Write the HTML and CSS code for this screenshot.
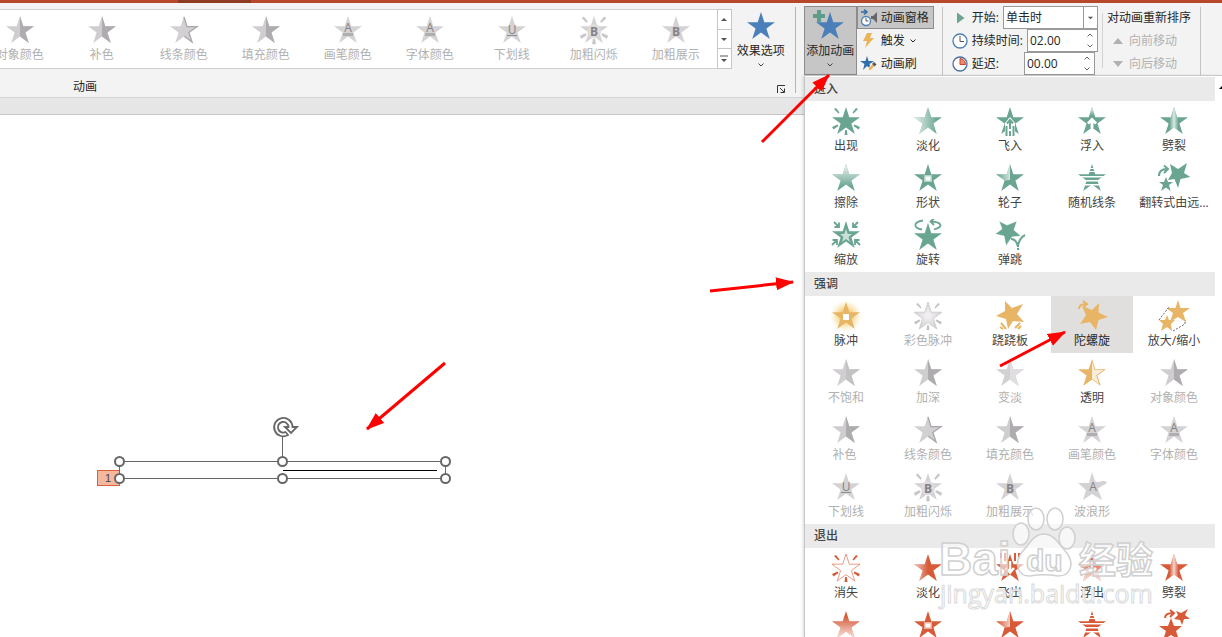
FILE: index.html
```html
<!DOCTYPE html>
<html lang="zh-CN">
<head>
<meta charset="utf-8">
<title>动画</title>
<link rel="stylesheet" href="styles.css">
</head>
<body>
<svg class="defs" aria-hidden="true">
  <defs>
    <linearGradient id="fade-left"><stop offset="0.1" stop-color="#fff" stop-opacity="0.75"/><stop offset="0.85" stop-color="#fff" stop-opacity="0"/></linearGradient>
    <linearGradient id="fade-half"><stop offset="0.1" stop-color="#fff" stop-opacity="0.55"/><stop offset="0.5" stop-color="#fff" stop-opacity="0"/></linearGradient>
    <linearGradient id="fade-quarter"><stop offset="0.1" stop-color="#fff" stop-opacity="0"/><stop offset="1" stop-color="#fff" stop-opacity="0.7"/></linearGradient>
    <linearGradient id="fade-top" x2="0" y2="1"><stop offset="0" stop-color="#fff" stop-opacity="0.9"/><stop offset="0.85" stop-color="#fff" stop-opacity="0"/></linearGradient>
    <linearGradient id="fade-bottom" x2="0" y2="1"><stop offset="0.2" stop-color="#fff" stop-opacity="0"/><stop offset="1" stop-color="#fff" stop-opacity="0.85"/></linearGradient>
    <linearGradient id="fade-mid"><stop offset="0.34" stop-color="#fff" stop-opacity="0"/><stop offset="0.5" stop-color="#fff" stop-opacity="0.75"/><stop offset="0.66" stop-color="#fff" stop-opacity="0"/></linearGradient>
    <radialGradient id="glow"><stop offset="0.4" stop-color="#f3c766" stop-opacity="0.8"/><stop offset="1" stop-color="#f9e3a8" stop-opacity="0"/></radialGradient>
    <radialGradient id="core"><stop offset="0" stop-color="#f6f3f6"/><stop offset="1" stop-color="#d2d0d2"/></radialGradient>
    <path id="star" d="M16 2 19.3 12.2H30L21.4 18.6 24.8 29 16 22.6 7.2 29 10.6 18.6 2 12.2H12.7Z"/>
    <path id="half" d="M16 2 19.3 12.2H30L21.4 18.6 24.8 29 16 22.6Z"/>
    <path id="rays" d="M4 4 6 3 9.500 7.500 8.500 8.500ZM28 4 26 3 22.500 7.500 23.500 8.500ZM2 22 7.500 19.500 8.500 21 3.500 24.500ZM30 22 24.500 19.500 23.500 21 28.500 24.500ZM14.500 30H17.500L16.800 25H15.200Z"/>
    <clipPath id="bars-clip"><path d="M0 0H32V6H0ZM0 7H32V9H0ZM0 10H32V14H0ZM0 15.500H32V18H0ZM0 19.500H32V22H0ZM0 23.500H32V32H0Z"/></clipPath>
    <marker id="head" viewBox="0 0 18 14" markerWidth="18" markerHeight="14" refX="17" refY="7" markerUnits="userSpaceOnUse" orient="auto"><path d="M0 0.500 18 7 0 13.500Z" fill="#f00"/></marker>

    <symbol id="i-solid" viewBox="0 0 32 32"><use href="#star" fill="currentColor"/></symbol>
    <symbol id="i-appear" viewBox="0 0 32 32"><use href="#star" fill="currentColor"/><use href="#rays" fill="currentColor"/></symbol>
    <symbol id="i-vanish" viewBox="0 0 32 32"><use href="#star" fill="#fff" stroke="currentColor" stroke-opacity="0.6"/><use href="#rays" fill="currentColor"/></symbol>
    <symbol id="i-fade" viewBox="0 0 32 32"><use href="#star" fill="currentColor"/><use href="#star" fill="url(#fade-left)"/></symbol>
    <symbol id="i-fadeout" viewBox="0 0 32 32"><use href="#star" fill="currentColor"/><use href="#star" fill="url(#fade-half)"/></symbol>
    <symbol id="i-flyin" viewBox="0 0 32 32"><use href="#star" fill="currentColor"/><path d="M16 12 21 18V32H11V18Z" fill="#fff"/><path d="M16 15V24M13 18.500 16 15 19 18.500M12.500 21V31M16 26V31M19.500 21V31" fill="none" stroke="currentColor" stroke-width="2"/></symbol>
    <symbol id="i-flyout" viewBox="0 0 32 32"><use href="#star" fill="currentColor"/><path d="M16 9V20M12 16 16 20.500 20 16" fill="none" stroke="#fff" stroke-width="2.500"/><path d="M11 1V9M7 1V6M21 1V9M25 1V6" stroke="currentColor" stroke-width="2"/></symbol>
    <symbol id="i-floatin" viewBox="0 0 32 32"><use href="#star" fill="currentColor"/><path d="M16 2 19.300 12.200H12.700Z" fill="url(#fade-top)"/><path d="M16 23V15M12 18.500 16 14.500 20 18.500" fill="none" stroke="#fff" stroke-width="2.800"/></symbol>
    <symbol id="i-floatout" viewBox="0 0 32 32"><use href="#star" fill="currentColor"/><use href="#star" fill="url(#fade-bottom)"/><path d="M16 10V20M12 16 16 20 20 16" fill="none" stroke="#fff" stroke-width="2.500"/></symbol>
    <symbol id="i-split" viewBox="0 0 32 32"><use href="#star" fill="currentColor"/><use href="#star" fill="url(#fade-mid)"/></symbol>
    <symbol id="i-wipe" viewBox="0 0 32 32"><use href="#star" fill="currentColor"/><use href="#star" fill="url(#fade-top)"/></symbol>
    <symbol id="i-wipeout" viewBox="0 0 32 32"><use href="#star" fill="currentColor"/><use href="#star" fill="url(#fade-bottom)"/></symbol>
    <symbol id="i-shape" viewBox="0 0 32 32"><use href="#star" fill="currentColor"/><path d="M12 13H20V20H12Z" fill="#fff" fill-opacity="0.500"/><path d="M13.500 14.500H18.500V18.500H13.500Z" fill="#fff"/></symbol>
    <symbol id="i-wheel" viewBox="0 0 32 32"><use href="#star" fill="currentColor"/><path d="M16 2V18L10.600 18.600 2 12.200H12.700Z" fill="url(#fade-quarter)"/></symbol>
    <symbol id="i-bars" viewBox="0 0 32 32"><use href="#star" fill="currentColor" clip-path="url(#bars-clip)"/></symbol>
    <symbol id="i-turn" viewBox="0 0 32 32"><path d="M12 2 20 7 29 1 26 11 32.500 15 22.500 17 20 26 16.500 17 10 18 14 11Z" fill="currentColor"/><path d="M8 15 10 20H15L11 23 12.500 29 8 25.500 3 29 5 23 1 20H6Z" fill="currentColor"/><path d="M1 14C1 9 4 7 9 7M6 3.500 10 7 6 11" fill="none" stroke="currentColor" stroke-width="2"/></symbol>
    <symbol id="i-turnout" viewBox="0 0 32 32"><path d="M13 9 16 17H24L18 22 21 31 13 26 5 31 8 22 1 17H10Z" fill="currentColor"/><path d="M18 2 23 4 30 0 27 6 32 10 26 10 24 16 22 11 16 10 20 6Z" fill="currentColor"/><path d="M7 9C7 5 10 4 15 4M12 1 16 4 12 8" fill="none" stroke="currentColor" stroke-width="2"/></symbol>
    <symbol id="i-zoom" viewBox="0 0 32 32"><use href="#star" fill="currentColor"/><path d="M16 10 17.800 15H22L18.500 18 20 23 16 20 12 23 13.500 18 10 15H14.200Z" fill="#fff" fill-opacity="0.650"/><path d="M4 3 8.500 7.500M9 3.500V8H4.500M28 3 23.500 7.500M23 3.500V8H27.500M2 26 7 21M2.500 21H7V26M30 26 25 21M29.500 21H25V26" fill="none" stroke="currentColor" stroke-width="1.800"/></symbol>
    <symbol id="i-swivel" viewBox="0 0 32 32"><path d="M16 4 19.300 14.200H30L21.400 20.600 24.800 31 16 24.600 7.200 31 10.600 20.600 2 14.200H12.700Z" fill="currentColor"/><path d="M11 1.500C1 3 1 9 10 10.500M22 10.500C32 8 30 3 19 2.500M22 -0.500 18.500 2.500 22 6" fill="none" stroke="currentColor" stroke-width="1.800"/></symbol>
    <symbol id="i-bounce" viewBox="0 0 32 32"><path d="M5 2 13 6 23 2 20 11 27 17 18 18 12 27 10 17 1 15 8 10Z" fill="currentColor" stroke="#fff" stroke-width="0.600"/><path d="M17 20C21 20 23 23 24 28 24 23 27 18 31 16" fill="none" stroke="currentColor" stroke-width="2"/><path d="M24 29V31" stroke="currentColor" stroke-width="2"/></symbol>
    <symbol id="i-pulse" viewBox="0 0 32 32"><circle cx="16" cy="16" r="16" fill="url(#glow)"/><use href="#star" fill="currentColor"/><path d="M13 14H19V20H13Z" fill="#fff"/></symbol>
    <symbol id="i-colorpulse" viewBox="0 0 32 32"><use href="#star" fill="url(#core)" stroke="#cac8ca" stroke-width="0.800"/><use href="#rays" fill="#c4c2c4"/></symbol>
    <symbol id="i-teeter" viewBox="0 0 32 32"><path d="M11 1 18 8 29 4 23 14 30 22 19 21 14 29 12 19 2 16 11 11Z" fill="currentColor"/><path d="M7 23 12 29M6 27 9 29M26 23 21 28M27 26 24 29" stroke="currentColor" stroke-width="2"/></symbol>
    <symbol id="i-spin" viewBox="0 0 32 32"><path d="M6 6 16 10 23 3 22.500 12.500 32 17 22.500 20 20 30 14 22 4 24 10 15Z" fill="currentColor"/><path d="M3 9C3 5 6 4 10 4M7 1 11 4 7 8" fill="none" stroke="currentColor" stroke-width="2"/></symbol>
    <symbol id="i-grow" viewBox="0 0 32 32"><path d="M20 0 22.500 8H32L25 13 28 22 20 17 12 22 15 13 8 8H17.500Z" fill="currentColor"/><path d="M9 15 11 20H17L13 24 14 31 9 27 3 31 5 24 1 20H7Z" fill="currentColor"/><path d="M1 20 11 7M15 31 27 24V20" fill="none" stroke="#666" stroke-dasharray="2 1.500"/></symbol>
    <symbol id="i-plain" viewBox="0 0 32 32"><use href="#star" fill="#d0ced0"/><use href="#half" fill="#c3c1c3"/></symbol>
    <symbol id="i-lighten" viewBox="0 0 32 32"><use href="#star" fill="#d2d0d2"/><use href="#half" fill="#e0dee0"/></symbol>
    <symbol id="i-dark" viewBox="0 0 32 32"><use href="#star" fill="#cfcdcf"/><use href="#half" fill="#aeacae"/></symbol>
    <symbol id="i-clear" viewBox="0 0 32 32"><use href="#star" fill="currentColor"/><path d="M16 5 18.700 13H27.500L20.300 18.300 23 27 16 21.800Z" fill="#fff" fill-opacity="0.750"/></symbol>
    <symbol id="i-line" viewBox="0 0 32 32"><use href="#star" fill="#d2d0d2"/><path d="M16 3 19 12.700H29L20.800 18.500 24 28 16 22" fill="none" stroke="#aaa8aa" stroke-width="1.300"/></symbol>
    <symbol id="i-font" viewBox="0 0 32 32"><use href="#star" fill="#d4d2d4"/><text x="16" y="18" class="glyph">A</text><path d="M11 19H21V22H11Z" fill="#b0aeb0"/></symbol>
    <symbol id="i-under" viewBox="0 0 32 32"><use href="#star" fill="#d4d2d4"/><text x="16" y="20" class="glyph">U</text><path d="M11 21.500H21" stroke="#8f8d8f"/></symbol>
    <symbol id="i-bold" viewBox="0 0 32 32"><use href="#star" fill="#d4d2d4"/><text x="16" y="22" class="glyph glyph-bold">B</text></symbol>
    <symbol id="i-flash" viewBox="0 0 32 32"><use href="#star" fill="#d4d2d4"/><use href="#rays" fill="#c8c6c8" stroke="#c8c6c8" stroke-width="0.600"/><circle cx="16" cy="17" r="7" fill="#dddbdd"/><text x="16" y="22" class="glyph glyph-bold">B</text></symbol>
    <symbol id="i-wave" viewBox="0 0 32 32"><path d="M16 1 19 10C23 13 26 8 31 11 29 15 25 14 22 18L26 29 16 23 7 29 10 19 2 12H13Z" fill="#d4d2d4"/><text x="17" y="20" class="glyph">A</text></symbol>
    <symbol id="i-chev" viewBox="0 0 8 4"><path d="M1.500 0.500 4 3 6.500 0.500" fill="none" stroke="currentColor"/></symbol>
    <symbol id="i-clock" viewBox="0 0 16 16"><circle cx="8" cy="8" r="7" fill="#fff" stroke="#4a7fb5" stroke-width="1.300"/><path d="M8 3V8.500H12" fill="none" stroke="#555"/></symbol>
  </defs>
</svg>

<div class="app">
  <div class="titlebar"><span class="active-tab"></span></div>
  <div class="ribbon">
    <section class="group-anim">
      <div class="anim-row">
        <div class="gallery">
          <button class="item off"><svg><use href="#i-dark"/></svg>对象颜色</button>
          <button class="item off"><svg><use href="#i-dark"/></svg>补色</button>
          <button class="item off"><svg><use href="#i-line"/></svg>线条颜色</button>
          <button class="item off"><svg><use href="#i-dark"/></svg>填充颜色</button>
          <button class="item off"><svg><use href="#i-font"/></svg>画笔颜色</button>
          <button class="item off"><svg><use href="#i-font"/></svg>字体颜色</button>
          <button class="item off"><svg><use href="#i-under"/></svg>下划线</button>
          <button class="item off"><svg><use href="#i-flash"/></svg>加粗闪烁</button>
          <button class="item off"><svg><use href="#i-bold"/></svg>加粗展示</button>
        </div>
        <div class="scroller">
          <button aria-label="上"><svg viewBox="0 0 8 8"><path d="M1 6 4 3 7 6Z"/></svg></button>
          <button aria-label="下"><svg viewBox="0 0 8 8"><path d="M1 3 4 6 7 3Z"/></svg></button>
          <button aria-label="其他"><svg viewBox="0 0 8 8"><path d="M0 0.500H8V1.500H0ZM1 4 4 7 7 4Z"/></svg></button>
        </div>
        <button class="big effect"><svg class="star"><use href="#i-solid"/></svg>效果选项<svg class="chev"><use href="#i-chev"/></svg></button>
      </div>
      <div class="group-foot">
        <span>动画</span>
        <button class="launcher" aria-label="更多"><svg viewBox="0 0 9 9"><path d="M0.500 8V0.500H8M3 3 7 7M7.500 3.500V7.500H3.500" fill="none" stroke="#333"/></svg></button>
      </div>
    </section>
    <div class="sep tall"></div>
    <section class="group-adv">
      <button class="big add"><svg class="star" viewBox="0 0 32 32"><use href="#star" fill="currentColor"/><path d="M3 0H7V4H11V8H7V12H3V8H-1V4H3Z" fill="#5d9d87"/></svg>添加动画<svg class="chev"><use href="#i-chev"/></svg></button>
      <div class="tools">
        <button class="tool pressed"><svg viewBox="0 0 18 18"><circle cx="6" cy="12" r="4.500" fill="#fff" stroke="#4a7fb5" stroke-width="1.300"/><path d="M6 9V12H8.500" fill="none" stroke="#555"/><path d="M1 3H6M4 0.500 7 3 4 5.500" fill="none" stroke="#2f6cab" stroke-width="1.500"/><path d="M11 7H13L17 3V14L13 10H11Z" fill="#666"/></svg>动画窗格</button>
        <button class="tool"><svg viewBox="0 0 18 18"><path d="M7 1H12L10 6H14L5 16 7 9H3Z" fill="#eab45c"/></svg>触发<svg class="chev"><use href="#i-chev"/></svg></button>
        <button class="tool"><svg viewBox="0 0 18 18"><path d="M7 1 8.500 6H14L9.500 9 11 14 7 11 3 15 4.500 9 0 6H5.500Z" fill="#2f6cab"/><path d="M8 14 12 9 14.500 11.500 10 16Z" fill="#eab45c" stroke="#fff" stroke-width="0.700"/><path d="M12 9 14 7 16.500 9.500 14.500 11.500Z" fill="#555"/></svg>动画刷</button>
      </div>
    </section>
    <div class="sep"></div>
    <section class="timing">
      <div class="field"><svg viewBox="0 0 16 16"><path d="M5 2.500 12.500 8 5 13.500Z" fill="#6ba590"/></svg><label for="start">开始:</label>
        <span class="pick"><select id="start"><option>单击时</option></select><svg viewBox="0 0 8 8"><path d="M1 3 4 6 7 3Z"/></svg></span></div>
      <div class="field"><svg><use href="#i-clock"/></svg><label for="dur">持续时间:</label>
        <span class="spin"><input id="dur" type="text" value="02.00"><span class="steps"><button aria-label="增加"><svg class="up"><use href="#i-chev"/></svg></button><button aria-label="减少"><svg><use href="#i-chev"/></svg></button></span></span></div>
      <div class="field delay"><svg viewBox="0 0 16 16"><circle cx="8" cy="8" r="7" fill="#fff" stroke="#4a6f9f" stroke-width="1.300"/><path d="M8 8.500V2.500A6 6 0 0 1 13.500 8.500Z" fill="#ec8a72" stroke="#c8452a"/></svg><label for="delay">延迟:</label>
        <span class="spin"><input id="delay" type="text" value="00.00"><span class="steps"><button aria-label="增加"><svg class="up"><use href="#i-chev"/></svg></button><button aria-label="减少"><svg><use href="#i-chev"/></svg></button></span></span></div>
    </section>
    <div class="sep short"></div>
    <section class="reorder">
      <div class="reorder-title">对动画重新排序</div>
      <button class="move"><svg viewBox="0 0 10 10"><path d="M0 8 5 2 10 8Z"/></svg>向前移动</button>
      <button class="move"><svg viewBox="0 0 10 10"><path d="M0 2 5 8 10 2Z"/></svg>向后移动</button>
    </section>
    <div class="sep"></div>
  </div>
  <div class="band"></div>
  <main class="slide">
    <span class="tag">1</span>
    <svg class="selection" viewBox="0 0 340 76" aria-label="选定的直线">
      <path d="M7.500 48.500H333.500V65.500H7.500ZM170.500 48V24" fill="none" stroke="#666"/>
      <path d="M171 57.500H325" stroke="#000"/>
      <g fill="#fff" stroke="#666" stroke-width="2"><circle cx="7.500" cy="48.500" r="4.500"/><circle cx="170.500" cy="48.500" r="4.500"/><circle cx="333.500" cy="48.500" r="4.500"/><circle cx="7.500" cy="65.500" r="4.500"/><circle cx="170.500" cy="65.500" r="4.500"/><circle cx="333.500" cy="65.500" r="4.500"/></g>
      <path d="M176 22A9.200 9.200 0 1 1 180.500 14H185L179 20 173 14H176.500A5.300 5.300 0 1 0 173.500 19Z" fill="#fff" stroke="#666" stroke-width="1.800"/>
    </svg>
  </main>

  <aside class="menu">
    <div class="menu-list">
      <h2>进入</h2>
      <div class="grid green">
        <button class="item"><svg><use href="#i-appear"/></svg>出现</button>
        <button class="item"><svg><use href="#i-fade"/></svg>淡化</button>
        <button class="item"><svg><use href="#i-flyin"/></svg>飞入</button>
        <button class="item"><svg><use href="#i-floatin"/></svg>浮入</button>
        <button class="item"><svg><use href="#i-split"/></svg>劈裂</button>
        <button class="item"><svg><use href="#i-wipe"/></svg>擦除</button>
        <button class="item"><svg><use href="#i-shape"/></svg>形状</button>
        <button class="item"><svg><use href="#i-wheel"/></svg>轮子</button>
        <button class="item"><svg><use href="#i-bars"/></svg>随机线条</button>
        <button class="item"><svg><use href="#i-turn"/></svg>翻转式由远...</button>
        <button class="item"><svg><use href="#i-zoom"/></svg>缩放</button>
        <button class="item"><svg><use href="#i-swivel"/></svg>旋转</button>
        <button class="item"><svg><use href="#i-bounce"/></svg>弹跳</button>
      </div>
      <h2>强调</h2>
      <div class="grid gold">
        <button class="item"><svg><use href="#i-pulse"/></svg>脉冲</button>
        <button class="item off"><svg><use href="#i-colorpulse"/></svg>彩色脉冲</button>
        <button class="item"><svg><use href="#i-teeter"/></svg>跷跷板</button>
        <button class="item hover"><svg><use href="#i-spin"/></svg>陀螺旋</button>
        <button class="item"><svg><use href="#i-grow"/></svg>放大/缩小</button>
        <button class="item off"><svg><use href="#i-plain"/></svg>不饱和</button>
        <button class="item off"><svg><use href="#i-dark"/></svg>加深</button>
        <button class="item off"><svg><use href="#i-lighten"/></svg>变淡</button>
        <button class="item"><svg><use href="#i-clear"/></svg>透明</button>
        <button class="item off"><svg><use href="#i-dark"/></svg>对象颜色</button>
        <button class="item off"><svg><use href="#i-dark"/></svg>补色&nbsp;</button>
        <button class="item off"><svg><use href="#i-line"/></svg>线条颜色</button>
        <button class="item off"><svg><use href="#i-dark"/></svg>填充颜色</button>
        <button class="item off"><svg><use href="#i-font"/></svg>画笔颜色</button>
        <button class="item off"><svg><use href="#i-font"/></svg>字体颜色</button>
        <button class="item off"><svg><use href="#i-under"/></svg>下划线</button>
        <button class="item off"><svg><use href="#i-flash"/></svg>加粗闪烁</button>
        <button class="item off"><svg><use href="#i-bold"/></svg>加粗展示</button>
        <button class="item off"><svg><use href="#i-wave"/></svg>波浪形</button>
      </div>
      <h2>退出</h2>
      <div class="grid red">
        <button class="item"><svg><use href="#i-vanish"/></svg>消失</button>
        <button class="item"><svg><use href="#i-fadeout"/></svg>淡化</button>
        <button class="item"><svg><use href="#i-flyout"/></svg>飞出</button>
        <button class="item"><svg><use href="#i-floatout"/></svg>浮出</button>
        <button class="item"><svg><use href="#i-split"/></svg>劈裂</button>
        <button class="item"><svg><use href="#i-wipeout"/></svg></button>
        <button class="item"><svg><use href="#i-shape"/></svg></button>
        <button class="item"><svg><use href="#i-wheel"/></svg></button>
        <button class="item"><svg><use href="#i-bars"/></svg></button>
        <button class="item"><svg><use href="#i-turnout"/></svg></button>
      </div>
    </div>
    <div class="menu-scroll"><svg viewBox="0 0 7 4"><path d="M4 4 8 0 12 4Z"/></svg></div>
  </aside>

  <svg class="watermark" viewBox="0 0 230 110" aria-hidden="true">
    <g fill="#fff" fill-opacity="0.600" stroke="#d0d0d0" stroke-width="1.500">
      <text x="4" y="70" class="wm-logo">Bai</text>
      <ellipse cx="86" cy="29" rx="8" ry="11"/><ellipse cx="101" cy="14" rx="8" ry="11"/><ellipse cx="120" cy="14" rx="8" ry="11"/><ellipse cx="132" cy="33" rx="8" ry="11"/>
      <path d="M109 29C119 29 124 39 131 47 140 58 136 71 123 71 112 69 106 69 95 71 82 71 79 58 87 47 94 40 98 29 109 29Z"/>
      <text x="91" y="66" class="wm-du">du</text>
      <text x="144" y="69" class="wm-cn">经验</text>
    </g>
    <text x="5" y="98" class="wm-url">jingyan.baidu.com</text>
  </svg>
  <svg class="arrows" aria-hidden="true">
    <g stroke="#f00" stroke-width="3">
      <path d="M762 142 829 75" marker-end="url(#head)"/>
      <path d="M710 291 793 282" marker-end="url(#head)"/>
      <path d="M445 363 367 429" marker-end="url(#head)"/>
      <path d="M1000 366 1065 332" marker-end="url(#head)"/>
    </g>
  </svg>
</div>
</body>
</html>
```

FILE: styles.css
```css
* { box-sizing: border-box; }
body {
  margin: 0;
  font: 12px/16px "Open Sans", "Noto Sans CJK SC", sans-serif;
  color: #262626;
  overflow: hidden;
}
button, input, select {
  font: inherit;
  color: inherit;
  margin: 0;
  padding: 0;
  border: 0;
  background: none;
}
svg { display: block; flex: none; }
.defs { position: absolute; width: 0; height: 0; }
.app { position: relative; display: flex; flex-direction: column; height: 100vh; overflow: hidden; background: #fff; }

.titlebar { height: 3px; background: #b7472a; padding-left: 178px; }
.active-tab { display: block; width: 73px; height: 3px; background: #8f3a22; }

.ribbon { display: flex; align-items: flex-start; height: 95px; padding: 3px 21px 0 0; background: #f3f3f3; border-bottom: 1px solid #d2d2d2; white-space: nowrap; }
.sep { flex: none; width: 1px; height: 68px; margin-top: 1px; background: #c3c3c3; }
.sep.tall { height: 86px; background: #b4b4b4; }
.sep.short { height: 55px; margin-top: 7px; margin-left: 4px; background: #d2d2d2; }

.group-anim { flex: 1; min-width: 0; padding-right: 6px; }
.anim-row { display: flex; align-items: flex-start; }
.gallery { flex: 1; min-width: 0; display: flex; justify-content: flex-end; overflow: hidden; height: 60px; margin-top: 3px; background: #fff; border: solid #d0d0d0; border-width: 1px 0; }
.item { display: flex; flex: none; flex-direction: column; align-items: center; width: 82px; height: 57px; padding-top: 4px; gap: 1px; color: #444; }
.item svg { width: 32px; height: 32px; overflow: visible; }
.item.off { color: #b1b1b1; }
.scroller { display: flex; flex: none; flex-direction: column; width: 15px; height: 60px; margin-top: 3px; background: #fff; border: 1px solid #c6c6c6; }
.scroller button { flex: 1; display: flex; align-items: center; justify-content: center; }
.scroller button + button { border-top: 1px solid #c6c6c6; }
.scroller svg { width: 8px; height: 8px; fill: #555; }

.big { display: flex; flex: none; flex-direction: column; align-items: center; height: 69px; color: #262626; }
.big .star { width: 32px; height: 32px; margin: 4px 0 1px; color: #4a7fb9; overflow: visible; }
.big .chev { margin-top: 4px; color: #444; }
.chev { width: 8px; height: 4px; }
.effect { width: 56px; margin-left: 1px; }
.add { width: 53px; background: #c6c6c6; border: 1px solid #8c8c8c; }
.add .star { margin-top: 3px; }

.group-foot { display: flex; align-items: center; justify-content: space-between; padding: 4px 3px 0 73px; }
.launcher svg { width: 9px; height: 9px; margin-top: 4px; }

.group-adv { display: flex; flex: none; margin: 0 8px; }
.tools { display: flex; flex-direction: column; width: 77px; }
.tool { display: flex; align-items: center; gap: 3px; height: 23px; padding-left: 3px; }
.tool svg { width: 18px; height: 18px; }
.tool .chev { width: 8px; height: 4px; margin-left: 1px; }
.tool.pressed { background: #c6c6c6; border: 1px solid #8c8c8c; padding-left: 2px; }

.timing { flex: none; padding-left: 9px; }
.field { display: flex; align-items: center; height: 23px; gap: 4px; }
.field > svg { width: 16px; height: 16px; }
.pick { position: relative; width: 95px; height: 23px; background: #fff; border: 1px solid #999; margin-left: auto; }
.pick select { appearance: none; display: block; width: 100%; height: 21px; padding-left: 2px; }
.pick svg { position: absolute; top: 0; right: 0; width: 14px; height: 21px; padding: 0 3px; fill: #555; border-left: 1px solid #999; pointer-events: none; }
.spin { display: flex; width: 71px; height: 23px; background: #fff; border: 1px solid #999; margin-left: auto; }
.spin input { flex: 1; min-width: 0; padding-left: 2px; font-size: 12px; outline: 0; }
.steps { display: flex; flex-direction: column; justify-content: space-between; align-items: center; width: 15px; padding: 3px 0; }
.steps svg { width: 8px; height: 4px; color: #666; }
.steps .up { transform: rotate(180deg); }
.delay { padding-right: 3px; }

.reorder { flex: none; width: 97px; padding-left: 4px; }
.reorder-title { line-height: 23px; }
.move { display: flex; align-items: center; gap: 6px; height: 23px; padding-left: 6px; color: #b1b1b1; }
.move svg { width: 10px; height: 10px; fill: #b1b1b1; }

.band { height: 17px; background: #e6e6e6; border-bottom: 1px solid #c6c6c6; }
.slide { position: relative; flex: 1; background: #fff; }
.selection { position: absolute; left: 112px; top: 298px; width: 340px; height: 76px; }
.tag { position: absolute; left: 97px; top: 355px; width: 23px; height: 16px; padding-left: 7px; font: 11px/14px "Liberation Sans", sans-serif; color: #444; background: #f5b79e; border: 1px solid #d9603b; }

.menu { position: absolute; top: 75px; right: 0; bottom: 0; display: flex; overflow: hidden; padding-top: 1px; background: #fff; border: solid #c6c6c6; border-width: 1px 0 0 1px; box-shadow: -1px 1px 3px rgba(0, 0, 0, 0.15); }
.menu-list { width: 410px; }
.menu h2 { margin: 0; padding-left: 9px; font-size: 12px; line-height: 24px; font-weight: 500; color: #444; background: #eaeaea; }
.grid { display: grid; grid-template-columns: repeat(5, 1fr); }
.green svg { color: #69a590; }
.gold svg { color: #e8b566; }
.red svg { color: #d75b39; }
.hover { background: #e1dfdd; color: #262626; }
.menu-scroll { width: 7px; padding-top: 8px; }
.menu-scroll svg { width: 7px; height: 4px; }

.glyph { font: 12px "Open Sans", sans-serif; fill: #858385; text-anchor: middle; }
.glyph-bold { font-weight: 700; }

.watermark { position: absolute; left: 935px; top: 505px; width: 230px; height: 110px; overflow: visible; pointer-events: none; }
.wm-logo { font: 700 46px "Liberation Sans", sans-serif; }
.wm-du { font: 700 30px "Liberation Sans", sans-serif; }
.wm-cn { font: 700 37px "Noto Sans CJK SC", sans-serif; }
.wm-url { font: 25px "Open Sans", sans-serif; fill: #fff; fill-opacity: 0.8; stroke: #dadada; stroke-width: 1; }
.arrows { position: absolute; left: 0; top: 0; width: 100%; height: 100%; pointer-events: none; }
```
